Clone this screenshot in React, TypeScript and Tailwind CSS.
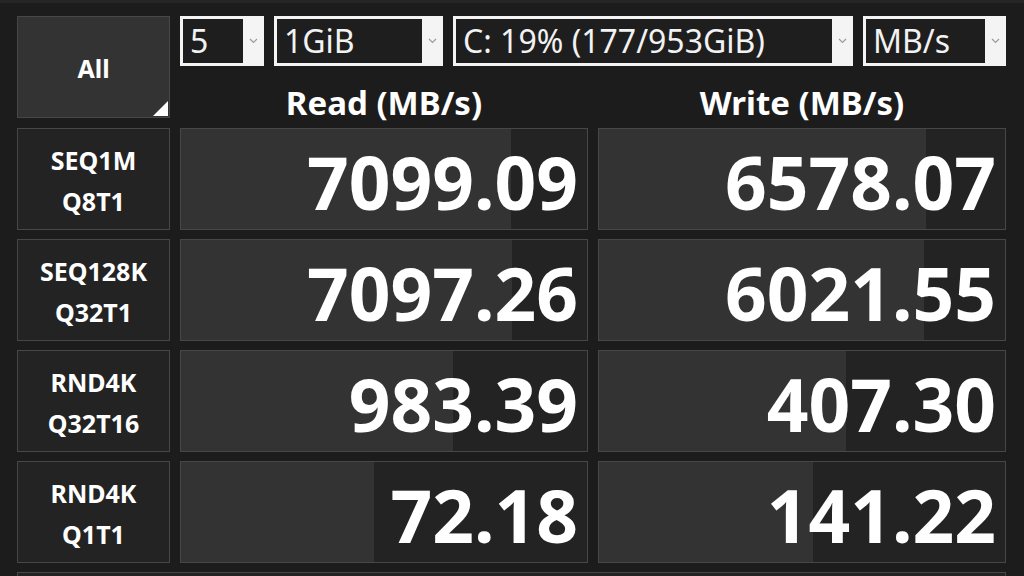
const rows = [
  { a: "SEQ1M", b: "Q8T1", read: "7099.09", write: "6578.07", rp: 330, wp: 327 },
  { a: "SEQ128K", b: "Q32T1", read: "7097.26", write: "6021.55", rp: 331, wp: 325 },
  { a: "RND4K", b: "Q32T16", read: "983.39", write: "407.30", rp: 272, wp: 247 },
  { a: "RND4K", b: "Q1T1", read: "72.18", write: "141.22", rp: 193, wp: 214 },
];

function Combo({ label, w }: { label: string; w: string }) {
  return (
    <div className={`${w} flex h-[50px] border-[3px] border-r-0 border-[#f4f4f4] bg-[#f4f4f4]`}>
      <div className="flex flex-1 items-center bg-[#1e1e1e] pl-[7px] text-[32px] leading-none text-[#f2f2f2]">
        {label}
      </div>
      <div className="flex w-[21px] items-center justify-center">
        <svg width="9" height="6" viewBox="0 0 9 6" fill="none">
          <path d="M1 1l3.5 3.5L8 1" stroke="#9a9a9a" strokeWidth="1.2" />
        </svg>
      </div>
    </div>
  );
}

function Value({ text, fill }: { text: string; fill: number }) {
  return (
    <div className="relative flex h-[102px] items-center justify-end overflow-hidden border border-[#474747] bg-[#232323] pr-[9px]">
      <div className="absolute inset-y-0 left-0 bg-[#333333]" style={{ width: fill }} />
      <span className="relative mt-[4px] text-[73px] font-bold leading-none text-white">
        {text}
      </span>
    </div>
  );
}

export default function App() {
  return (
    <div
      className="h-[576px] w-[1024px] overflow-hidden border-t-[3px] border-[#262626] bg-[#1c1c1c] pl-[17px] pt-[13px]"
      style={{ fontFamily: '"Noto Sans", "Open Sans", sans-serif' }}
    >
      <div className="grid grid-cols-[153px_408px_408px] gap-x-[10px] gap-y-[9px]">
        <div className="relative flex h-[102px] items-center justify-center border border-[#474747] bg-[#333333]">
          <span className="mt-[4px] text-[25px] font-bold text-white">All</span>
          <div className="absolute bottom-[1px] right-[1px] h-0 w-0 border-b-[15px] border-l-[15px] border-b-white border-l-transparent" />
        </div>
        <div className="col-span-2 flex flex-col">
          <div className="flex gap-[10px]">
            <Combo label="5" w="w-[84px]" />
            <Combo label="1GiB" w="w-[169px]" />
            <Combo label="C: 19% (177/953GiB)" w="w-[400px]" />
            <Combo label="MB/s" w="w-[143px]" />
          </div>
          <div className="grid flex-1 grid-cols-2 gap-[10px]">
            <div className="flex items-center justify-center pt-[20px] text-[33px] font-bold leading-none text-white">Read (MB/s)</div>
            <div className="flex items-center justify-center pt-[20px] text-[33px] font-bold leading-none text-white">Write (MB/s)</div>
          </div>
        </div>
        {rows.map((r, i) => (
          <div key={i} className="contents">
            <div className="flex h-[102px] flex-col items-center justify-center gap-[16px] border border-[#474747] bg-[#232323] pt-[4px] text-[25px] font-bold leading-none text-white">
              <span>{r.a}</span>
              <span>{r.b}</span>
            </div>
            <Value text={r.read} fill={r.rp} />
            <Value text={r.write} fill={r.wp} />
          </div>
        ))}
        <div className="col-span-3 h-[40px] border border-[#474747] bg-[#232323]" />
      </div>
    </div>
  );
}
